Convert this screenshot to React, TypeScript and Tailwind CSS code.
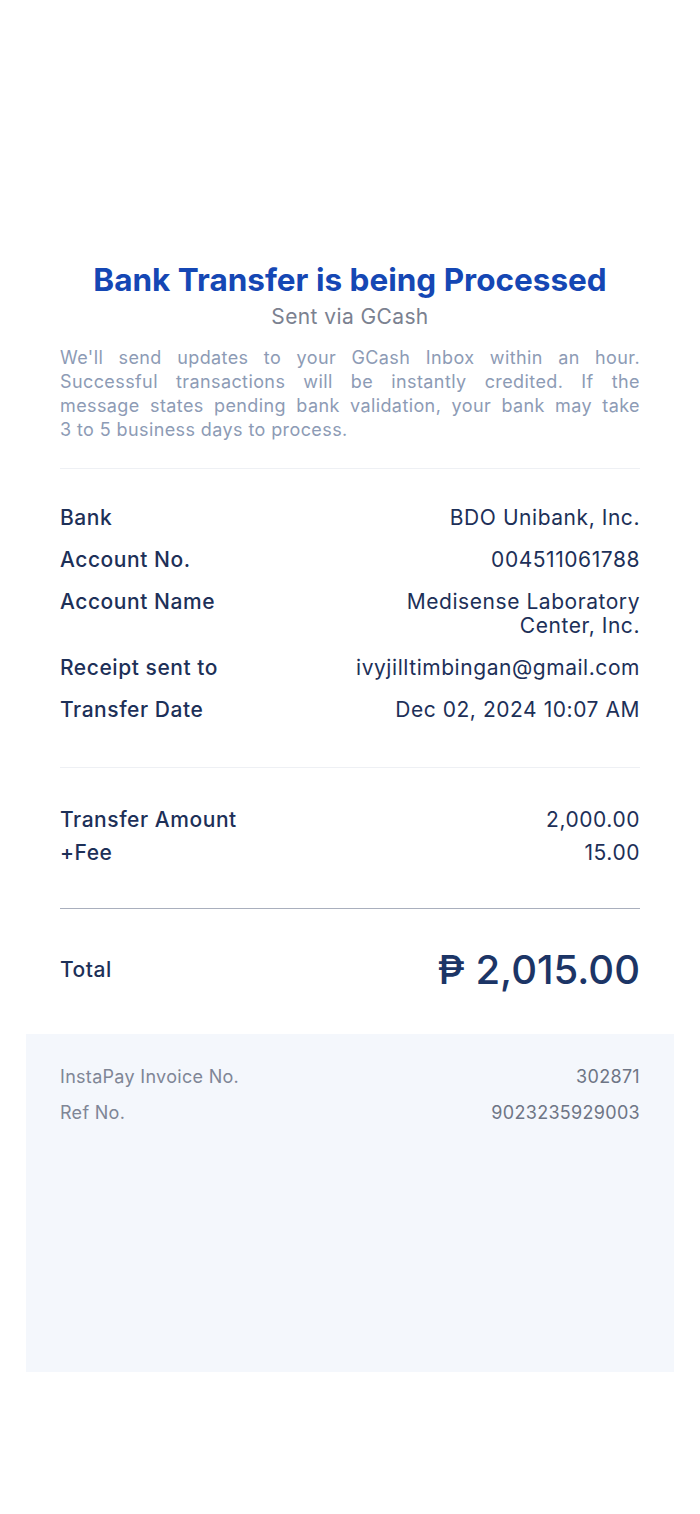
import React from "react";

const font = { fontFamily: "Inter, 'Noto Sans', 'Liberation Sans', sans-serif" };

function Row({ label, value }: { label: string; value: React.ReactNode }) {
  return (
    <div className="flex justify-between items-start text-[21px] leading-[24px] tracking-[0.55px] text-[#1d3058]">
      <span className="font-medium shrink-0">{label}</span>
      <span className="text-right">{value}</span>
    </div>
  );
}

const lines = [
  "We'll send updates to your GCash Inbox within an hour.",
  "Successful transactions will be instantly credited. If the",
  "message states pending bank validation, your bank may take",
];

export default function App() {
  return (
    <div className="w-[700px] h-[1514px] bg-white px-[26px] pt-[262px]" style={font}>
      <div className="px-[34px]">
        <h1 className="text-center text-[31.5px] leading-[36px] font-bold text-[#1547b4]">
          Bank Transfer is being Processed
        </h1>
        <p className="mt-[6px] text-center text-[21px] leading-[26px] tracking-[0.4px] text-[#7b8190]">Sent via GCash</p>
        <div className="mt-[16px] text-[18px] leading-[24px] tracking-[0.4px] text-[#8d9bb5]">
          {lines.map((l) => (
            <div key={l} className="text-justify [text-align-last:justify]">
              {l}
            </div>
          ))}
          <div>3 to 5 business days to process.</div>
        </div>
        <div className="mt-[26px] h-px bg-[#eef0f4]" />
        <div className="mt-[37px] flex flex-col gap-[18px]">
          <Row label="Bank" value="BDO Unibank, Inc." />
          <Row label="Account No." value="004511061788" />
          <Row
            label="Account Name"
            value={
              <>
                Medisense Laboratory
                <br />
                Center, Inc.
              </>
            }
          />
          <Row label="Receipt sent to" value="ivyjilltimbingan@gmail.com" />
          <Row label="Transfer Date" value="Dec 02, 2024 10:07 AM" />
        </div>
        <div className="mt-[45px] h-px bg-[#eef0f4]" />
        <div className="mt-[40px] flex flex-col gap-[9px]">
          <Row label="Transfer Amount" value="2,000.00" />
          <Row label="+Fee" value="15.00" />
        </div>
        <div className="mt-[43px] h-px bg-[#a9afbd]" />
        <div className="mt-[39px] flex justify-between items-center h-[44px] text-[#1d3058]">
          <span className="text-[21px] tracking-[0.5px] font-medium">Total</span>
          <span className="text-[40px] leading-[44px] font-medium text-[#1c3566]">₱ 2,015.00</span>
        </div>
      </div>
      <div className="mt-[42px] h-[338px] bg-[#f4f7fc] px-[34px] pt-[31px]">
        <div className="flex flex-col gap-[12px] text-[18px] leading-[24px] tracking-[0.3px] text-[#7f8696]">
          <div className="flex justify-between">
            <span>InstaPay Invoice No.</span>
            <span className="text-[#6e7585]">302871</span>
          </div>
          <div className="flex justify-between">
            <span>Ref No.</span>
            <span className="text-[#6e7585]">9023235929003</span>
          </div>
        </div>
      </div>
    </div>
  );
}
